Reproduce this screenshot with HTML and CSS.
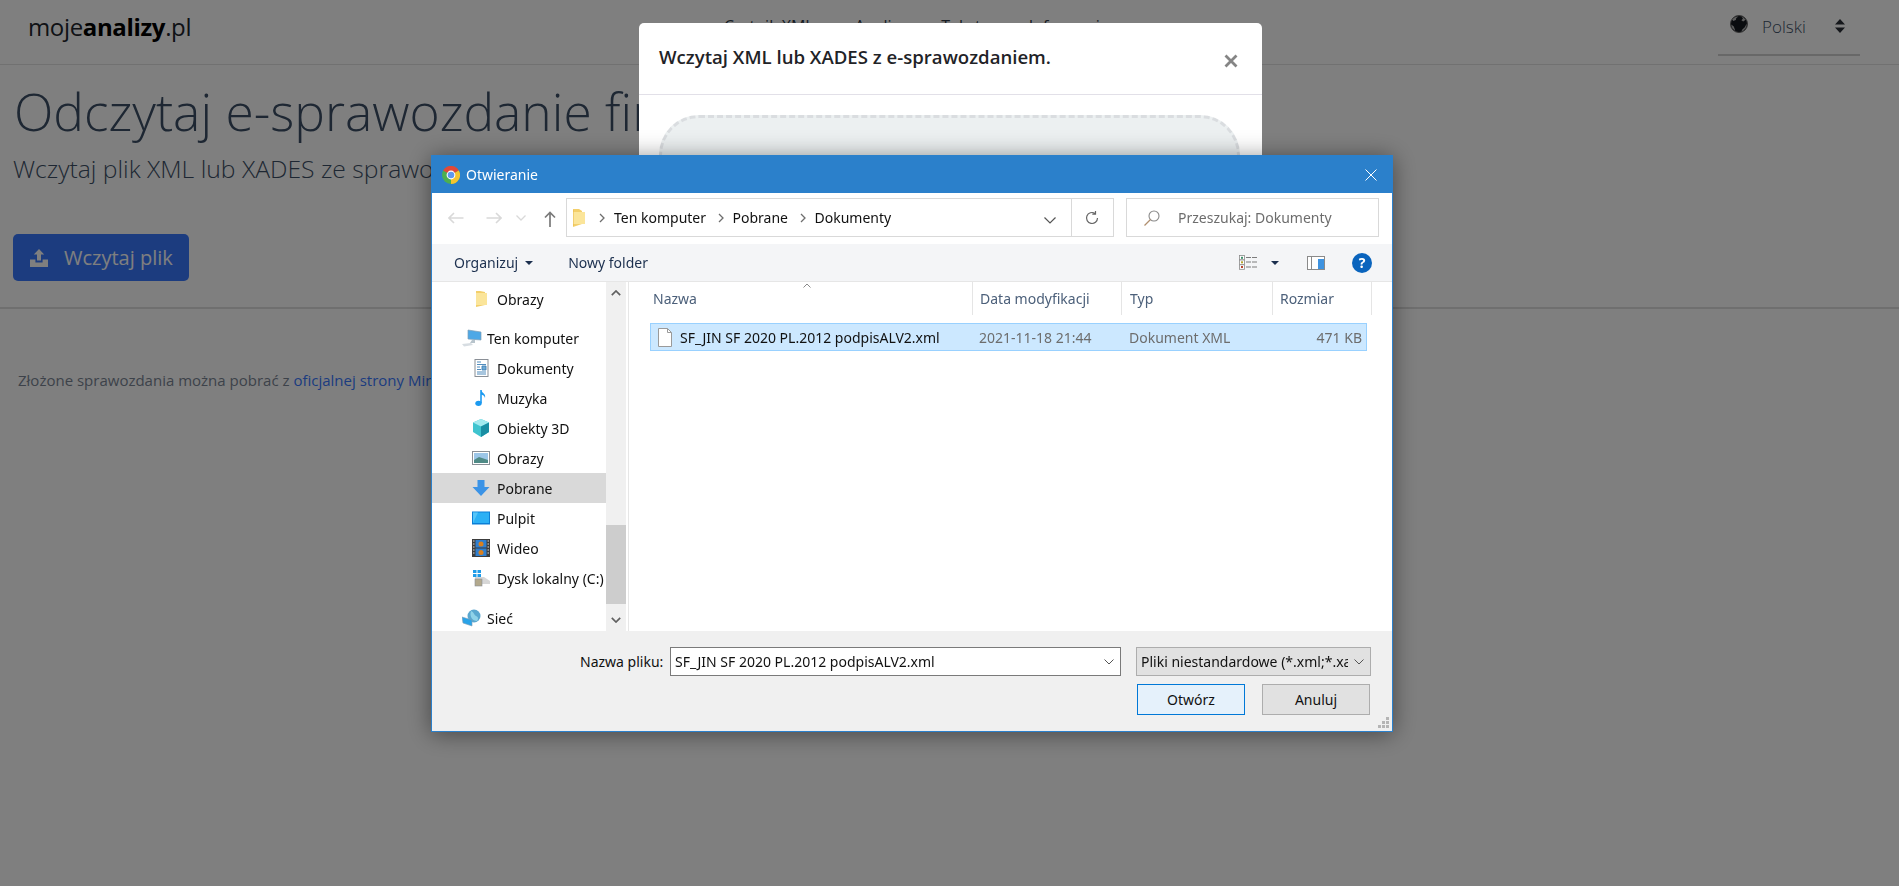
FILE: index.html
```html
<!DOCTYPE html>
<html lang="pl">
<head>
<meta charset="utf-8">
<title>mojeanalizy.pl</title>
<link rel="stylesheet" href="styles.css">
</head>
<body>
<header class="navbar">
  <a class="logo">moje<b>analizy</b>.pl</a>
  <nav class="menu">
    <a>Czytnik XML</a><a>Analizy</a><a>Tekst</a><a>Informacje</a>
  </nav>
  <div class="lang">
    <svg class="globe" viewBox="0 0 18 18"><circle cx="9" cy="9" r="8.500" fill="#14181e" stroke="#6b6b6b"/><path d="M8.500 1.400 6.300 3 5.800 5 3.200 6 2.200 4.600A8 8 0 0 1 8.500 1.400ZM1.300 9.500 3.800 11.500 5.300 15.800A8 8 0 0 1 1.300 9.500ZM11.300 1.500 13 3.400 11.400 5.200 13.200 6.400 15.600 4.800A8 8 0 0 0 11.300 1.500ZM16.700 8.600 14.800 12.200 12.300 14.400 11.400 16.500A8 8 0 0 0 16.700 8.600Z" fill="#b9b9b9"/></svg>
    <span class="lang-name">Polski</span>
    <svg class="sort" viewBox="0 0 10 14"><path d="M5 0 10 5.600H0ZM5 14 0 8.400H10Z" fill="#2b2f36"/></svg>
  </div>
</header>
<main class="content">
  <h1 class="title">Odczytaj e-sprawozdanie finansowe</h1>
  <p class="lead">Wczytaj plik XML lub XADES ze sprawozdaniem finansowym</p>
  <button class="upload-btn">
    <svg class="upload-icon" viewBox="0 0 18 18"><path d="M9 0 14.200 5.600H11V11.600H7V5.600H3.800ZM0 10.400H5.400V13.400H12.600V10.400H18V18H0Z" fill="currentColor"/></svg>
    Wczytaj plik
  </button>
  <hr class="rule">
  <p class="note">Złożone sprawozdania można pobrać z <a>oficjalnej strony Ministerstwa Finansów</a>.</p>
</main>

<div class="backdrop"></div>

<section class="modal">
  <div class="modal-head">
    <h2 class="modal-title">Wczytaj XML lub XADES z e-sprawozdaniem.</h2>
    <svg class="modal-close" viewBox="0 0 14 14"><path d="M1.500 1.500 12.500 12.500M12.500 1.500 1.500 12.500" stroke="#858585" stroke-width="2.800"/></svg>
  </div>
  <div class="modal-body"><div class="dropzone"></div></div>
</section>

<section class="dialog">
  <div class="d-title">
    <svg class="chrome" viewBox="0 0 18 18">
      <circle cx="9" cy="9" r="9" fill="#4caf50"/>
      <path d="M9 9 1.200 4.500A9 9 0 0 1 16.800 4.500Z" fill="#e0483a"/>
      <path d="M9 9 16.800 4.500A9 9 0 0 1 9 18Z" fill="#f4c430"/>
      <circle cx="9" cy="9" r="4.400" fill="#fff"/><circle cx="9" cy="9" r="3.300" fill="#5f98ee"/>
    </svg>
    <span class="d-title-text">Otwieranie</span>
    <svg class="d-close" viewBox="0 0 12 12"><path d="M.5.5 11.500 11.500M11.500.5.5 11.500" stroke="#fff" stroke-width="1"/></svg>
  </div>

  <div class="d-nav">
    <div class="d-arrows">
      <svg class="arrow a-back" viewBox="0 0 16 12"><path d="M15.500 6H1M6 1 1 6 6 11" fill="none" stroke="#d9d9d9" stroke-width="1.600"/></svg>
      <svg class="arrow a-fwd" viewBox="0 0 16 12"><path d="M.5 6H15M10 1 15 6 10 11" fill="none" stroke="#d9d9d9" stroke-width="1.600"/></svg>
      <svg class="arrow a-down" viewBox="0 0 10 6"><path d="M.5.5 5 5 9.500.5" fill="none" stroke="#d9d9d9" stroke-width="1.300"/></svg>
      <svg class="arrow a-up" viewBox="0 0 12 16"><path d="M6 16V1.500M1 6.500 6 1.500 11 6.500" fill="none" stroke="#7a7a7a" stroke-width="1.700"/></svg>
    </div>
    <div class="crumbs">
      <svg class="folder-sm" viewBox="0 0 12 18"><path d="M0 0H6L9 2V15L0 18Z" fill="#f3cf6b"/><path d="M3 3 12 3V15H0V3Z" fill="#fbe59a"/><path d="M0 1V17" stroke="#e9b949"/></svg>
      <svg class="chev" viewBox="0 0 6 10"><path d="M1 1 5 5 1 9" fill="none" stroke="#6e6e6e" stroke-width="1.300"/></svg>
      <span>Ten komputer</span>
      <svg class="chev" viewBox="0 0 6 10"><path d="M1 1 5 5 1 9" fill="none" stroke="#6e6e6e" stroke-width="1.300"/></svg>
      <span>Pobrane</span>
      <svg class="chev" viewBox="0 0 6 10"><path d="M1 1 5 5 1 9" fill="none" stroke="#6e6e6e" stroke-width="1.300"/></svg>
      <span>Dokumenty</span>
      <svg class="crumb-drop" viewBox="0 0 12 7"><path d="M.5.5 6 6 11.500.5" fill="none" stroke="#555" stroke-width="1.200"/></svg>
      <span class="crumb-refresh">
        <svg viewBox="0 0 14 14"><path d="M12.500 7A5.500 5.500 0 1 1 10 2.400M10.500 0V3.200H7.300" fill="none" stroke="#666" stroke-width="1.200"/></svg>
      </span>
    </div>
    <div class="search">
      <svg class="search-icon" viewBox="0 0 16 16"><circle cx="10" cy="6" r="5" fill="none" stroke="#8a8a8a" stroke-width="1.100"/><path d="M6.500 9.500.5 15.500" stroke="#b08e6e" stroke-width="1.200"/></svg>
      <span>Przeszukaj: Dokumenty</span>
    </div>
  </div>

  <div class="d-tools">
    <span class="tool">Organizuj</span>
    <i class="caret caret-org"></i>
    <span class="tool tool-new">Nowy folder</span>
    <svg class="view-icon" viewBox="0 0 18 15"><g fill="#fff" stroke="#8a8a8a" stroke-width=".8"><rect x=".4" y=".4" width="5" height="4.500"/><rect x=".4" y="5" width="5" height="4.500"/><rect x=".4" y="9.800" width="5" height="4.500"/></g><rect x="2" y="1.800" width="2" height="2" fill="#3d8f6a"/><rect x="2" y="6.300" width="2" height="2" fill="#b8a52e"/><rect x="2" y="11" width="2" height="2" fill="#b8442e"/><path d="M7 2.500H18M7 7H18M7 12H18" stroke="#7c7c7c" stroke-dasharray="5 1"/></svg>
    <i class="caret caret-view"></i>
    <svg class="pane-icon" viewBox="0 0 18 14"><rect x=".5" y=".5" width="17" height="13" fill="#fff" stroke="#8a8a8a"/><rect x="4" y="1" width="1" height="12" fill="#8a8a8a"/><rect x="11" y="3" width="6" height="10" fill="#3f93e0"/></svg>
    <span class="help">?</span>
  </div>

  <div class="d-main">
    <aside class="side">
      <ul class="tree">
        <li class="row lvl2"><svg class="ic" viewBox="0 0 18 18"><path d="M4 1H8L13 2V15L4 17Z" fill="#f3cf6b"/><path d="M6 3H15V15H4V3Z" fill="#fbe59a"/></svg>Obrazy</li>
        <li class="row lvl1 gap-top"><svg class="ic ic-wide" viewBox="0 0 20 18"><path d="M6 1 19 3V11L6 10Z" fill="#4ea8e6" stroke="#7f9db5" stroke-width=".7"/><path d="M10 11 8 14 13 14 13 11Z" fill="#b8c4cc"/><path d="M0 15 9 14 11 16 2 17.500Z" fill="#d7dde2"/></svg>Ten komputer</li>
        <li class="row lvl2"><svg class="ic" viewBox="0 0 18 18"><rect x="3" y=".5" width="13" height="17" fill="#fff" stroke="#8a8f96"/><path d="M5 3H9M5 5.500H14M5 8H8M10 7H14V11H10ZM5 10.500H9M5 13H14M5 15H14" stroke="#3d7fb5" fill="#6fa9d4" stroke-width=".9"/></svg>Dokumenty</li>
        <li class="row lvl2"><svg class="ic" viewBox="0 0 18 18"><path d="M9 1V14" stroke="#1c9af0" stroke-width="1.600"/><ellipse cx="6.500" cy="14.300" rx="3.200" ry="2.600" fill="#1c9af0"/><path d="M9 1C10 4 14 4.500 13 9 12.500 6.500 11 6 9 5.500Z" fill="#1c9af0"/></svg>Muzyka</li>
        <li class="row lvl2"><svg class="ic" viewBox="0 0 18 18"><path d="M9 0 17 3.500V13L9 18 1 13V3.500Z" fill="#3fc4cf"/><path d="M9 7.500 1 3.500 9 0 17 3.500Z" fill="#a3eaef"/><path d="M9 7.500V18L17 13V3.500Z" fill="#1a8ea3"/></svg>Obiekty 3D</li>
        <li class="row lvl2"><svg class="ic" viewBox="0 0 18 18"><rect x=".5" y="2.500" width="17" height="13" fill="#fff" stroke="#8a8f96"/><rect x="2" y="4" width="14" height="10" fill="#9cc6e8"/><path d="M2 11 7 8 16 11V14H2Z" fill="#4f8a86"/></svg>Obrazy</li>
        <li class="row lvl2 row-sel"><svg class="ic" viewBox="0 0 18 18"><path d="M5.500 1H12.500V8H17.500L9 17 .5 8H5.500Z" fill="#3b93e6"/></svg>Pobrane</li>
        <li class="row lvl2"><svg class="ic" viewBox="0 0 18 18"><rect x="0" y="2.500" width="18" height="13" fill="#0b7fd6"/><rect x="1" y="3.500" width="16" height="10.500" fill="#2bb0f5"/><path d="M1 14 6 3.500H1Z" fill="#56c5f8"/></svg>Pulpit</li>
        <li class="row lvl2"><svg class="ic" viewBox="0 0 18 18"><rect width="18" height="18" fill="#3c3c3c"/><rect x="3.500" y="1" width="11" height="7.500" fill="#2f7fd0"/><rect x="3.500" y="9.500" width="11" height="7.500" fill="#2f7fd0"/><circle cx="9" cy="5" r="2.500" fill="#d9801f"/><circle cx="9" cy="13.500" r="2.500" fill="#d9801f"/><path d="M1 2H2.500M1 5H2.500M1 8H2.500M1 11H2.500M1 14H2.500M15.500 2H17M15.500 5H17M15.500 8H17M15.500 11H17M15.500 14H17" stroke="#ddd"/></svg>Wideo</li>
        <li class="row lvl2"><svg class="ic" viewBox="0 0 18 18"><path d="M3 8H12L18 12V15H3Z" fill="#d7d7d7"/><rect x="3" y="10" width="7" height="7" fill="#b3a98d" stroke="#8a8f96" stroke-width=".6"/><rect x="1" y="1" width="3.500" height="3" fill="#1f9be8"/><rect x="5.500" y="1" width="3.500" height="3" fill="#1f9be8"/><rect x="1" y="5" width="3.500" height="3" fill="#1f9be8"/><rect x="5.500" y="5" width="3.500" height="3" fill="#1f9be8"/></svg>Dysk lokalny (C:)</li>
        <li class="row lvl1 gap-last"><svg class="ic ic-wide" viewBox="0 0 20 18"><circle cx="12" cy="7" r="6.500" fill="#5aa7cf"/><path d="M9 2C12 3 12 6 14 7 17 8 16 11 15 12 11 12 7 8 9 2Z" fill="#8fd2e8"/><path d="M0 8 10 11V17L1 14Z" fill="#2aa3e8" stroke="#7f9db5" stroke-width=".6"/></svg>Sieć</li>
      </ul>
      <div class="scrollbar">
        <svg class="sb-arrow" viewBox="0 0 10 6"><path d="M.8 5.200 5 1 9.200 5.200" fill="none" stroke="#606060" stroke-width="1.700"/></svg>
        <div class="sb-track"><div class="sb-thumb"></div></div>
        <svg class="sb-arrow" viewBox="0 0 10 6"><path d="M.8.800 5 5 9.200.800" fill="none" stroke="#606060" stroke-width="1.700"/></svg>
      </div>
    </aside>
    <div class="list">
      <div class="list-head">
        <svg class="sort-up" viewBox="0 0 8 5"><path d="M.5 4.500 4 1 7.500 4.500" fill="none" stroke="#8a8a8a"/></svg>
        <span class="col c-name">Nazwa</span>
        <span class="col c-date">Data modyfikacji</span>
        <span class="col c-type">Typ</span>
        <span class="col c-size">Rozmiar</span>
      </div>
      <div class="file">
        <svg class="file-icon" viewBox="0 0 14 19"><path d="M.5.500H9.500L13.500 4.500V18.500H.5Z" fill="#fff" stroke="#9a9a9a"/><path d="M9.500.5V4.500H13.500" fill="none" stroke="#9a9a9a"/></svg>
        <span class="f-name">SF_JIN SF 2020 PL.2012 podpisALV2.xml</span>
        <span class="f-date">2021-11-18 21:44</span>
        <span class="f-type">Dokument XML</span>
        <span class="f-size">471 KB</span>
      </div>
    </div>
  </div>

  <div class="d-foot">
    <div class="foot-row">
      <label class="foot-label">Nazwa pliku:</label>
      <div class="name-input"><span>SF_JIN SF 2020 PL.2012 podpisALV2.xml</span>
        <svg class="foot-chev" viewBox="0 0 10 6"><path d="M.5.500 5 5 9.500.500" fill="none" stroke="#555"/></svg></div>
      <div class="type-select"><span>Pliki niestandardowe (*.xml;*.xades)</span>
        <svg class="foot-chev" viewBox="0 0 10 6"><path d="M.5.500 5 5 9.500.500" fill="none" stroke="#555"/></svg></div>
    </div>
    <div class="foot-btns">
      <button class="btn btn-primary">Otwórz</button>
      <button class="btn">Anuluj</button>
    </div>
    <svg class="grip" viewBox="0 0 11 11"><path d="M8 0h3v3H8ZM4 4h3v3H4ZM8 4h3v3H8ZM0 8h3v3H0ZM4 8h3v3H4ZM8 8h3v3H8Z" fill="#b5b5b5"/></svg>
  </div>
</section>
</body>
</html>
```
FILE: styles.css
```css
* { box-sizing: border-box; }
html, body { margin: 0; padding: 0; height: 100%; overflow: hidden; }
body { font-family: "Open Sans", "Noto Sans", sans-serif; background: #fff; color: #3c4f66; }

/* page behind the overlay */
.navbar { display: flex; align-items: flex-start; height: 65px; border-bottom: 1px solid #e2e2e2; padding-left: 28px; }
.logo { font-size: 24px; line-height: 32px; margin-top: 11px; width: 696px; color: #1e242c; font-weight: 400; letter-spacing: -.35px; flex: none; }
.logo b { font-weight: 700; color: #000; }
.menu { display: flex; gap: 41px; font-size: 16px; line-height: 22px; margin-top: 15px; color: #2f3a48; flex: none; width: 994px; }
.menu a:nth-child(2) { margin-right: -7px; }
.menu a:nth-child(3) { margin-right: 7px; }
.lang { display: flex; align-items: center; width: 142px; height: 56px; padding: 0 0 6px 12px; border-bottom: 2px solid #d0d0d0; flex: none; }
.globe { width: 18px; height: 18px; }
.lang-name { margin: 4px 0 0 14px; font-size: 17px; font-weight: 300; color: #3c4f66; }
.sort { width: 10px; height: 14px; margin: 4px 0 0 29px; }

.content { padding: 0 13px; }
.title { font-size: 51.500px; line-height: 68px; font-weight: 300; margin: 12px 0 0 1px; color: #3c4f66; white-space: nowrap; }
.lead { font-size: 24.700px; line-height: 32px; font-weight: 300; margin: 8px 0 0; color: #3c4f66; white-space: nowrap; }
.upload-btn { display: flex; align-items: center; gap: 16px; width: 176px; height: 47px; margin-top: 49px; padding: 0 0 0 17px; border: 0; border-radius: 5px; background: #3979ff; color: #fff; font: 400 20px "Open Sans", sans-serif; white-space: nowrap; }
.upload-icon { width: 18px; height: 18px; }
.rule { border: 0; border-top: 2px solid #dedede; margin: 26px -13px 0; }
.note { font-size: 15px; line-height: 22px; margin: 60px 0 0 5px; color: #7a8594; white-space: nowrap; }
.note a { color: #3979ff; }

.backdrop { position: fixed; inset: 0; background: rgba(0, 0, 0, .5); }

/* bootstrap-style modal */
.modal { position: fixed; left: 639px; top: 23px; width: 623px; height: 600px; background: #fff; border-radius: 5px; }
.modal-head { display: flex; justify-content: space-between; height: 72px; border-bottom: 1px solid #e2e0e8; padding: 21px 24px 0 20px; }
.modal-title { margin: 0; font-size: 18.600px; line-height: 26px; font-weight: 600; color: #1f2327; white-space: nowrap; }
.modal-close { width: 14px; height: 14px; margin-top: 10px; }
.modal-body { padding: 20px 22px 20px 20px; }
.dropzone { height: 300px; background: #ecf0f1; border: 3px dashed #dadde0; border-radius: 40px; }

/* Windows file dialog */
.dialog { position: fixed; left: 431px; top: 155px; width: 962px; height: 577px; display: flex; flex-direction: column; background: #fff; border: 1px solid #2b80cb; box-shadow: 0 2px 22px rgba(0, 0, 0, .45); font-family: "Noto Sans", "Open Sans", sans-serif; font-size: 14px; color: #111; }
.d-title { flex: none; display: flex; align-items: center; height: 37px; background: #2b80cb; padding: 0 15px 0 10px; color: #fff; }
.chrome { width: 18px; height: 18px; }
.d-title-text { margin-left: 6px; font-size: 14px; flex: 1; }
.d-close { width: 12px; height: 12px; }

.d-nav { flex: none; display: flex; align-items: center; height: 51px; padding: 0 12px 2px 0; gap: 12px; }
.d-arrows { flex: none; display: flex; align-items: center; width: 122px; padding-left: 16px; }
.arrow { flex: none; }
.a-back, .a-fwd { width: 16px; height: 12px; }
.a-fwd { margin-left: 22px; }
.a-down { width: 10px; height: 6px; margin-left: 14px; }
.a-up { width: 12px; height: 16px; margin-left: 18px; margin-top: 2px; }
.crumbs { flex: none; display: flex; align-items: center; width: 548px; height: 39px; border: 1px solid #d9d9d9; padding-left: 6px; }
.folder-sm { width: 12px; height: 18px; margin-right: 14px; }
.chev { width: 6px; height: 10px; margin-right: 9px; }
.crumbs span { margin-right: 11.500px; }
.crumb-drop { width: 12px; height: 7px; position: absolute; left: 612px; top: 61px; }
.crumbs .crumb-refresh { position: absolute; left: 639px; top: 43px; width: 35px; height: 37px; border-left: 1px solid #d9d9d9; display: flex; align-items: center; justify-content: center; margin: 0; padding-left: 5px; }
.crumb-refresh svg { width: 14px; height: 14px; }
.search { flex: none; display: flex; align-items: center; width: 253px; height: 39px; border: 1px solid #d9d9d9; padding-left: 17px; color: #6d6d6d; }
.search-icon { width: 16px; height: 16px; margin-right: 18px; }

.d-tools { flex: none; display: flex; align-items: center; height: 38px; background: #f4f5f7; border-bottom: 1px solid #e6e6e6; padding-left: 22px; color: #1b2f4e; }
.tool-new { margin-left: 35px; }
.caret { display: block; width: 0; height: 0; border: 4px solid transparent; border-top: 4px solid #1b2f4e; border-bottom: 0; }
.caret-org { margin-left: 7px; }
.view-icon { width: 18px; height: 15px; margin-left: 591px; }
.caret-view { margin-left: 14px; }
.pane-icon { width: 18px; height: 14px; margin-left: 28px; }
.help { display: flex; align-items: center; justify-content: center; width: 20px; height: 20px; margin-left: 27px; border-radius: 50%; background: #0a64bd; color: #fff; font-weight: 700; font-size: 14px; }

.d-main { flex: 1; display: flex; min-height: 0; }
.side { flex: none; display: flex; width: 197px; border-right: 1px solid #e6e6e6; height: 100%; }
.tree { list-style: none; margin: 0; padding: 2px 0 0; width: 175px; overflow: hidden; }
.row { display: flex; align-items: center; height: 30px; white-space: nowrap; }
.lvl2 { padding-left: 40px; }
.lvl1 { padding-left: 34px; }
.gap-top { margin-top: 9px; }
.gap-last { margin-top: 10px; }
.row-sel { background: #d9d9d9; }
.ic { flex: none; width: 18px; height: 18px; margin-right: 7px; }
.ic-wide { width: 20px; margin-left: -4px; margin-right: 5px; }
.scrollbar { width: 20px; margin-right: 2px; background: #f0f0f0; display: flex; flex-direction: column; align-items: center; margin-left: auto; }
.sb-arrow { flex: none; width: 10px; height: 6px; margin: 8px 0; }
.sb-track { flex: 1; width: 100%; padding-top: 221px; }
.sb-thumb { height: 79px; background: #cdcdcd; }

.list { flex: 1; padding-left: 21px; }
.list-head { position: relative; display: flex; align-items: center; height: 33px; margin-left: -21px; color: #4c607a; }
.sort-up { position: absolute; left: 174px; top: 1px; width: 8px; height: 5px; }
.col { display: flex; align-items: center; height: 100%; padding-left: 7px; border-right: 1px solid #e5e5e5; }
.c-name { width: 344px; padding-left: 24px; }
.c-date { width: 149px; }
.c-type { width: 151px; padding-left: 8px; }
.c-size { width: 99px; }
.file { display: flex; align-items: center; height: 28px; width: 717px; margin-top: 8px; background: #cce8ff; border: 1px solid #99d1ff; padding-left: 7px; color: #6d6d6d; white-space: nowrap; }
.file-icon { flex: none; width: 14px; height: 19px; margin-right: 8px; }
.f-name { width: 299px; color: #111; }
.f-date { width: 150px; }
.f-type { width: 120px; }
.f-size { width: 113px; text-align: right; }

.d-foot { position: relative; flex: none; height: 100px; background: #f0f0f0; padding: 16px 21px 0 148px; }
.foot-row { display: flex; align-items: center; height: 29px; }
.foot-label { width: 90px; color: #111; }
.name-input, .type-select { position: relative; display: flex; align-items: center; height: 29px; white-space: nowrap; overflow: hidden; }
.name-input { width: 451px; background: #fff; border: 1px solid #7a7a7a; padding-left: 4px; }
.type-select { width: 235px; margin-left: 15px; background: #e1e1e1; border: 1px solid #adadad; padding-left: 4px; }
.type-select span { display: block; width: 207px; overflow: hidden; }
.foot-chev { position: absolute; right: 6px; top: 11px; width: 10px; height: 6px; background: inherit; }
.foot-btns { display: flex; justify-content: flex-end; gap: 17px; margin-top: 8px; padding-right: 1px; }
.btn { width: 108px; height: 31px; background: #e1e1e1; border: 1px solid #adadad; font: inherit; color: #111; padding: 0; }
.btn-primary { background: #e5f1fb; border-color: #0078d7; }
.grip { position: absolute; right: 3px; bottom: 3px; width: 11px; height: 11px; }
```
